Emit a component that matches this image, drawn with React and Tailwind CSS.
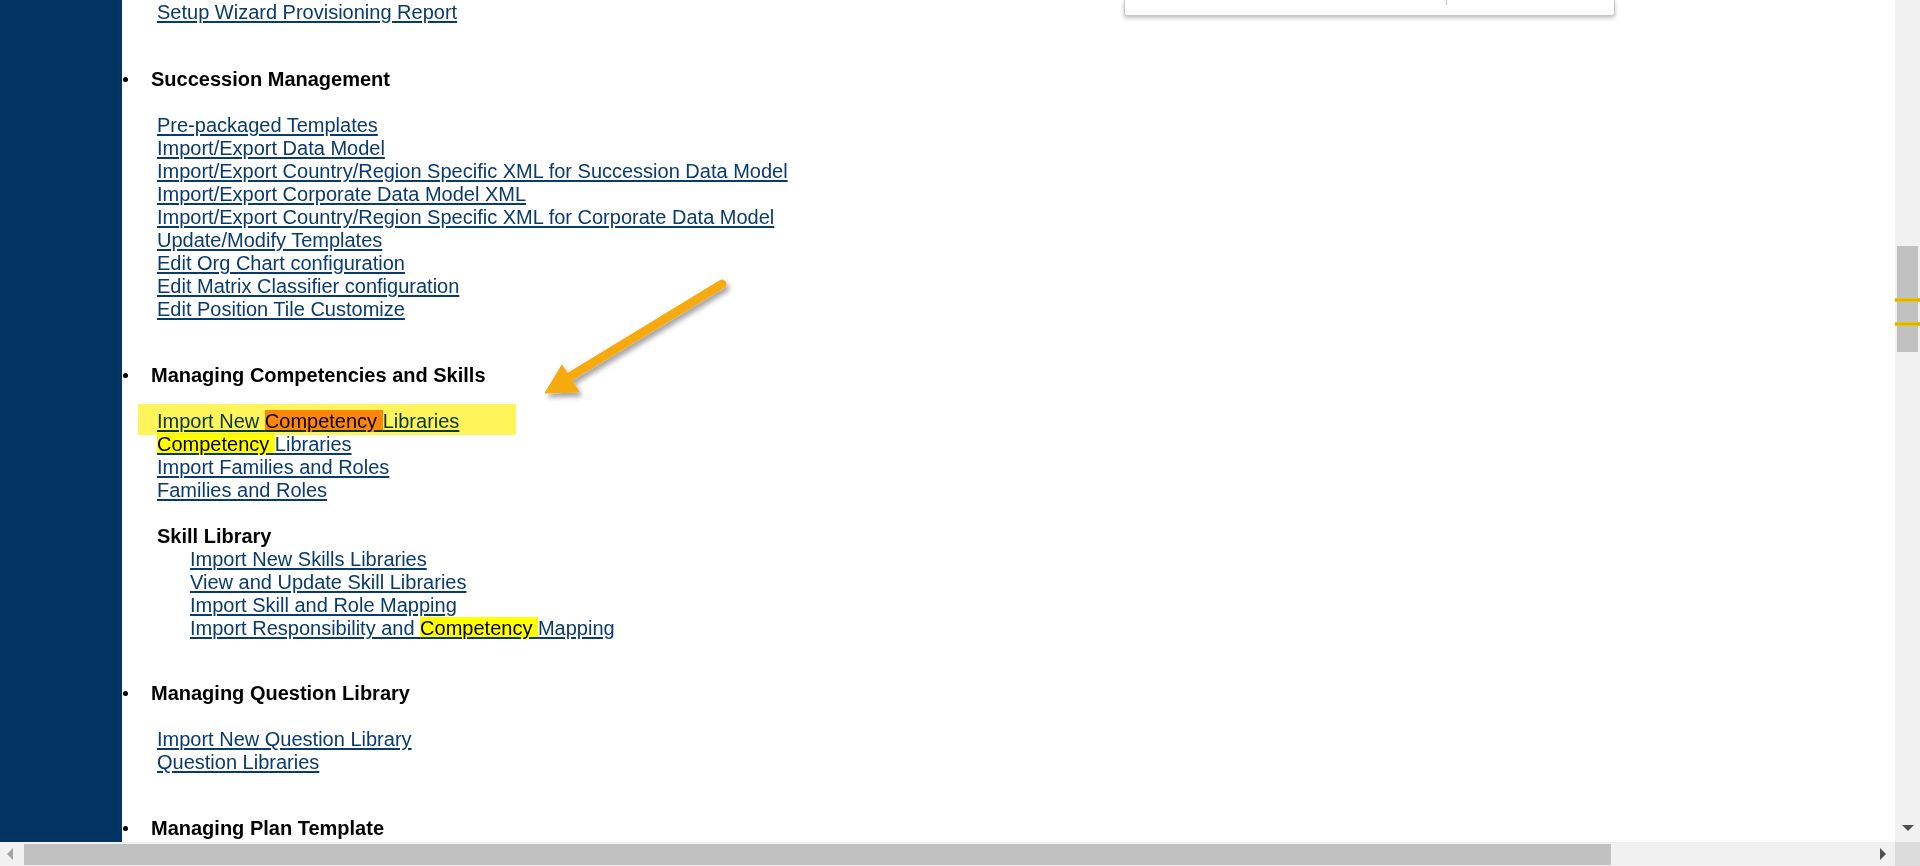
import React from 'react';

const successionLinks = [
  'Pre-packaged Templates',
  'Import/Export Data Model',
  'Import/Export Country/Region Specific XML for Succession Data Model',
  'Import/Export Corporate Data Model XML',
  'Import/Export Country/Region Specific XML for Corporate Data Model',
  'Update/Modify Templates',
  'Edit Org Chart configuration',
  'Edit Matrix Classifier configuration',
  'Edit Position Tile Customize',
];

const Heading = ({ children, className = '' }) => (
  <div className={`flex items-center h-[23px] ${className}`}>
    <span className="ml-[1px] w-[5px] h-[5px] rounded-full bg-black shrink-0" />
    <span className="ml-[23px] font-bold text-black leading-[23px]">{children}</span>
  </div>
);

const Link = ({ children }) => (
  <div className="h-[23px] leading-[23px] whitespace-nowrap">
    <a href="#" className="text-[#0a3b6d] underline underline-offset-[2px]">
      {children}
    </a>
  </div>
);

const Hit = ({ children, orange }) => (
  <mark className={`${orange ? 'bg-[#ff8c1a]' : 'bg-[#ffff00]'} text-black`}>{children}</mark>
);

const Arrow = () => (
  <svg className="absolute left-0 top-0 pointer-events-none" width="1920" height="866">
    <defs>
      <filter id="sh" x="-20%" y="-20%" width="140%" height="140%">
        <feDropShadow dx="3" dy="4" stdDeviation="2.5" floodColor="#000" floodOpacity="0.35" />
      </filter>
    </defs>
    <g filter="url(#sh)" fill="#f7aa0e" stroke="#f7aa0e">
      <line x1="722" y1="284" x2="566" y2="379" strokeWidth="9" strokeLinecap="round" />
      <polygon points="545,393 562,365 579,392" strokeWidth="1" strokeLinejoin="round" />
    </g>
  </svg>
);

const VScroll = () => (
  <div className="relative w-[25px] shrink-0 bg-[#f1f1f1] flex flex-col items-center">
    <div className="absolute left-[2px] top-[246px] w-[21px] h-[106px] bg-[#c1c1c1]" />
    <div className="absolute left-0 top-[298px] w-[25px] h-[4px] bg-[#d6b300] border-y border-[#e8c800]" />
    <div className="absolute left-0 top-[322px] w-[25px] h-[4px] bg-[#d6b300] border-y border-[#e8c800]" />
    <div className="mt-auto mb-[11px] w-0 h-0 border-x-[6px] border-x-transparent border-t-[6px] border-t-[#505050]" />
  </div>
);

const HScroll = () => (
  <div className="h-[24px] flex bg-[#f1f1f1] shrink-0">
    <div className="flex-1 flex items-center">
      <div className="ml-[7px] w-0 h-0 border-y-[6px] border-y-transparent border-r-[6px] border-r-[#a3a3a3]" />
      <div className="ml-[11px] w-[1587px] h-[21px] bg-[#c1c1c1]" />
      <div className="ml-auto mr-[9px] w-0 h-0 border-y-[6px] border-y-transparent border-l-[6px] border-l-[#505050]" />
    </div>
    <div className="w-[25px] bg-[#dcdcdc]" />
  </div>
);

export default function App() {
  return (
    <div className="relative w-[1920px] h-[866px] overflow-hidden bg-white flex flex-col font-['Liberation_Sans',Arial,sans-serif] text-[20px]">
      <div className="flex flex-1 min-h-0">
        <div className="w-[122px] shrink-0 bg-[#023463]" />
        <div className="relative flex-1 min-w-0 pt-[1px]">
          <div className="ml-[35px]">
            <Link>Setup Wizard Provisioning Report</Link>
          </div>

          <Heading className="mt-[44px]">Succession Management</Heading>
          <div className="ml-[35px] mt-[23px]">
            {successionLinks.map((t) => (
              <Link key={t}>{t}</Link>
            ))}
          </div>

          <Heading className="mt-[43px]">Managing Competencies and Skills</Heading>
          <div className="ml-[35px] mt-[23px]">
            <div className="relative">
              <Link>
                Import New <Hit orange>{'Competency '}</Hit>Libraries
              </Link>
              <div className="absolute left-[-19px] top-[-6px] w-[378px] h-[31px] bg-[#fff55a] mix-blend-multiply" />
            </div>
            <Link>
              <Hit>{'Competency '}</Hit>Libraries
            </Link>
            <Link>Import Families and Roles</Link>
            <Link>Families and Roles</Link>

            <div className="mt-[23px] h-[23px] leading-[23px] font-bold text-black">Skill Library</div>
            <div className="ml-[33px]">
              <Link>Import New Skills Libraries</Link>
              <Link>View and Update Skill Libraries</Link>
              <Link>Import Skill and Role Mapping</Link>
              <Link>
                Import Responsibility and <Hit>{'Competency '}</Hit>Mapping
              </Link>
            </div>
          </div>

          <Heading className="mt-[42px]">Managing Question Library</Heading>
          <div className="ml-[35px] mt-[23px]">
            <Link>Import New Question Library</Link>
            <Link>Question Libraries</Link>
          </div>

          <Heading className="mt-[43px]">Managing Plan Template</Heading>

          <div className="absolute left-[1002px] top-0 w-[491px] h-[16px] bg-white border border-t-0 border-[#c9c9c9] rounded-b-[3px] shadow-[0_2px_4px_rgba(0,0,0,0.25)]">
            <div className="ml-[321px] w-px h-[5px] bg-[#c4c4c4]" />
          </div>
        </div>
        <VScroll />
      </div>
      <HScroll />
      <Arrow />
    </div>
  );
}
